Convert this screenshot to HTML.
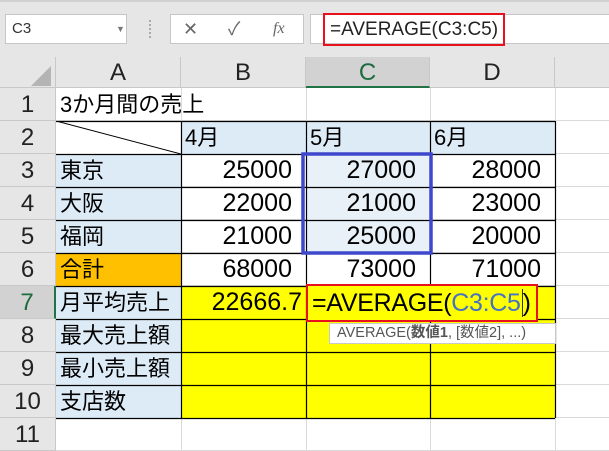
<!DOCTYPE html>
<html><head><meta charset="utf-8"><style>
body{margin:0;width:609px;height:450px;overflow:hidden;background:#fff;position:relative;font-family:"Liberation Sans","Noto Sans CJK JP",sans-serif}
.a{position:absolute;box-sizing:border-box}
.c{position:absolute;box-sizing:border-box;font-size:22px;line-height:33px;white-space:nowrap;overflow:visible}
.r{text-align:right;padding-right:14px;font-size:25px}
.l{padding-left:4px}
.hd{position:absolute;box-sizing:border-box;background:#e6e6e6;font-size:24px;text-align:center;color:#222}
</style></head><body>
<div class="a" style="left:0;top:0;width:609px;height:57px;background:#e6e6e6"></div>
<div class="a" style="left:0;top:0;width:609px;height:2px;background:#d0d0d0"></div>
<div class="a" style="left:5px;top:14px;width:122px;height:30px;background:#fff;border:1px solid #c6c6c6;font-size:15px;line-height:28px;padding-left:6px;color:#333">C3<span style="position:absolute;left:110px;top:0;font-size:9px;color:#777">▼</span></div>
<div class="a" style="left:149px;top:20px;width:3px;height:18px;border-left:2px dotted #aaa"></div>
<div class="a" style="left:170px;top:14px;width:134px;height:30px;background:#fff;border:1px solid #c6c6c6;color:#666;font-size:18px;line-height:28px">
<span style="position:absolute;left:12px">✕</span><span style="position:absolute;left:57px">✓</span><span style="position:absolute;left:102px;font-family:'Liberation Serif',serif;font-style:italic;font-size:16px">fx</span></div>
<div class="a" style="left:310px;top:14px;width:299px;height:30px;background:#fff;border:1px solid #c6c6c6;border-right:none"></div>
<div class="a" style="left:323px;top:13px;width:182px;height:33px;border:2px solid #e8121e;font-size:19px;line-height:29px;padding-left:5px;color:#222;white-space:nowrap">=AVERAGE(C3:C5)</div>

<div class="a" style="left:0;top:57px;width:56px;height:31px;background:#e6e6e6;border-right:1px solid #c8c8c8;border-bottom:1px solid #c8c8c8"></div>
<div class="a" style="left:31px;top:66px;width:0;height:0;border-left:20px solid transparent;border-bottom:20px solid #b4b4b4"></div>
<div class="hd" style="left:56px;top:57px;width:125px;height:31px;line-height:31px;border-right:1px solid #c8c8c8;border-bottom:1px solid #c8c8c8">A</div>
<div class="hd" style="left:181px;top:57px;width:125px;height:31px;line-height:31px;border-right:1px solid #c8c8c8;border-bottom:1px solid #c8c8c8">B</div>
<div class="hd" style="left:306px;top:57px;width:124px;height:31px;line-height:31px;background:#d2d2d2;color:#1e6b3e;border-right:1px solid #c8c8c8;border-bottom:2px solid #217346">C</div>
<div class="hd" style="left:430px;top:57px;width:125px;height:31px;line-height:31px;border-right:1px solid #c8c8c8;border-bottom:1px solid #c8c8c8">D</div>
<div class="hd" style="left:555px;top:57px;width:54px;height:31px;border-bottom:1px solid #c8c8c8"></div>

<script>
var b=document.body,h='';
var tops=[88,121,154,187,220,253,286,319,352,385,418];
for(var i=0;i<11;i++){var t=tops[i];
h+='<div class="hd" style="left:0;top:'+t+'px;width:56px;height:33px;line-height:33px;border-right:1px solid #c8c8c8;border-bottom:1px solid #c8c8c8;'+(i==6?'background:#d2d2d2;color:#1e6b3e;border-right:2px solid #217346':'')+'">'+(i+1)+'</div>';
h+='<div class="a" style="left:56px;top:'+t+'px;width:553px;height:33px;border-bottom:1px solid #dadada"></div>';}
[181,306,430,555].forEach(function(x){h+='<div class="a" style="left:'+x+'px;top:88px;width:1px;height:362px;background:#dadada"></div>';});
b.insertAdjacentHTML('beforeend',h);
</script>
<div class="a" style="left:56px;top:121px;width:125px;height:33px;background:#fff"><svg width="125" height="33" style="position:absolute;left:0;top:0"><line x1="0" y1="0" x2="125" y2="33" stroke="#000" stroke-width="1"/></svg></div>
<div class="c l" style="left:56px;top:88px">3か月間の売上</div>
<div class="c l" style="left:181px;top:121px;width:125px;height:33px;background:#ddebf7">4月</div>
<div class="c l" style="left:306px;top:121px;width:124px;height:33px;background:#ddebf7">5月</div>
<div class="c l" style="left:430px;top:121px;width:125px;height:33px;background:#ddebf7">6月</div>
<div class="c l" style="left:56px;top:154px;width:125px;height:33px;background:#ddebf7">東京</div>
<div class="c l" style="left:56px;top:187px;width:125px;height:33px;background:#ddebf7">大阪</div>
<div class="c l" style="left:56px;top:220px;width:125px;height:33px;background:#ddebf7">福岡</div>
<div class="c l" style="left:56px;top:253px;width:125px;height:33px;background:#ffc000">合計</div>
<div class="c l" style="left:56px;top:286px;width:125px;height:33px;background:#ddebf7">月平均売上</div>
<div class="c l" style="left:56px;top:319px;width:125px;height:33px;background:#ddebf7">最大売上額</div>
<div class="c l" style="left:56px;top:352px;width:125px;height:33px;background:#ddebf7">最小売上額</div>
<div class="c l" style="left:56px;top:385px;width:125px;height:33px;background:#ddebf7">支店数</div>
<div class="a" style="left:181px;top:286px;width:374px;height:132px;background:#ffff00"></div>
<div class="a" style="left:306px;top:154px;width:124px;height:99px;background:#e8f0f8"></div>
<div class="c r" style="left:181px;top:154px;width:125px">25000</div>
<div class="c r" style="left:306px;top:154px;width:124px">27000</div>
<div class="c r" style="left:430px;top:154px;width:125px">28000</div>
<div class="c r" style="left:181px;top:187px;width:125px">22000</div>
<div class="c r" style="left:306px;top:187px;width:124px">21000</div>
<div class="c r" style="left:430px;top:187px;width:125px">23000</div>
<div class="c r" style="left:181px;top:220px;width:125px">21000</div>
<div class="c r" style="left:306px;top:220px;width:124px">25000</div>
<div class="c r" style="left:430px;top:220px;width:125px">20000</div>
<div class="c r" style="left:181px;top:253px;width:125px">68000</div>
<div class="c r" style="left:306px;top:253px;width:124px">73000</div>
<div class="c r" style="left:430px;top:253px;width:125px">71000</div>
<div class="c r" style="left:181px;top:286px;width:125px;padding-right:4px">22666.7</div>
<svg class="a" style="left:0;top:0" width="609" height="450">
<g stroke="#000" stroke-width="1.2">
<line x1="56" y1="121.5" x2="555" y2="121.5"/>
<line x1="56" y1="154.5" x2="555" y2="154.5"/>
<line x1="56" y1="187.5" x2="555" y2="187.5"/>
<line x1="56" y1="220.5" x2="555" y2="220.5"/>
<line x1="56" y1="253.5" x2="555" y2="253.5"/>
<line x1="56" y1="286.5" x2="555" y2="286.5"/>
<line x1="56" y1="319.5" x2="555" y2="319.5"/>
<line x1="56" y1="352.5" x2="555" y2="352.5"/>
<line x1="56" y1="385.5" x2="555" y2="385.5"/>
<line x1="56" y1="418.5" x2="555" y2="418.5"/>
<line x1="181.5" y1="121" x2="181.5" y2="418"/>
<line x1="306.5" y1="121" x2="306.5" y2="418"/>
<line x1="430.5" y1="121" x2="430.5" y2="418"/>
<line x1="555.5" y1="121" x2="555.5" y2="418"/>
</g>
<rect x="303" y="154" width="128" height="99" fill="none" stroke="#3f48cc" stroke-width="3.5"/>
</svg>
<div class="a" style="left:306px;top:284px;width:232px;height:38px;border:2px solid #e8121e;background:#ffff00;font-size:25px;line-height:34px;padding-left:4px;white-space:nowrap;letter-spacing:-0.3px">=AVERAGE(<span style="color:#4472c4">C3:C5</span><span style="border-left:1px solid #333;margin-left:1px"></span>)</div>
<div class="a" style="left:329px;top:323px;width:227px;height:21px;background:#fff;border:1px solid #c8c8c8;font-size:14.5px;line-height:19px;padding-left:7px;color:#555;white-space:nowrap;overflow:hidden">AVERAGE(<b>数値1</b>, [数値2], ...)</div>
</body></html>
